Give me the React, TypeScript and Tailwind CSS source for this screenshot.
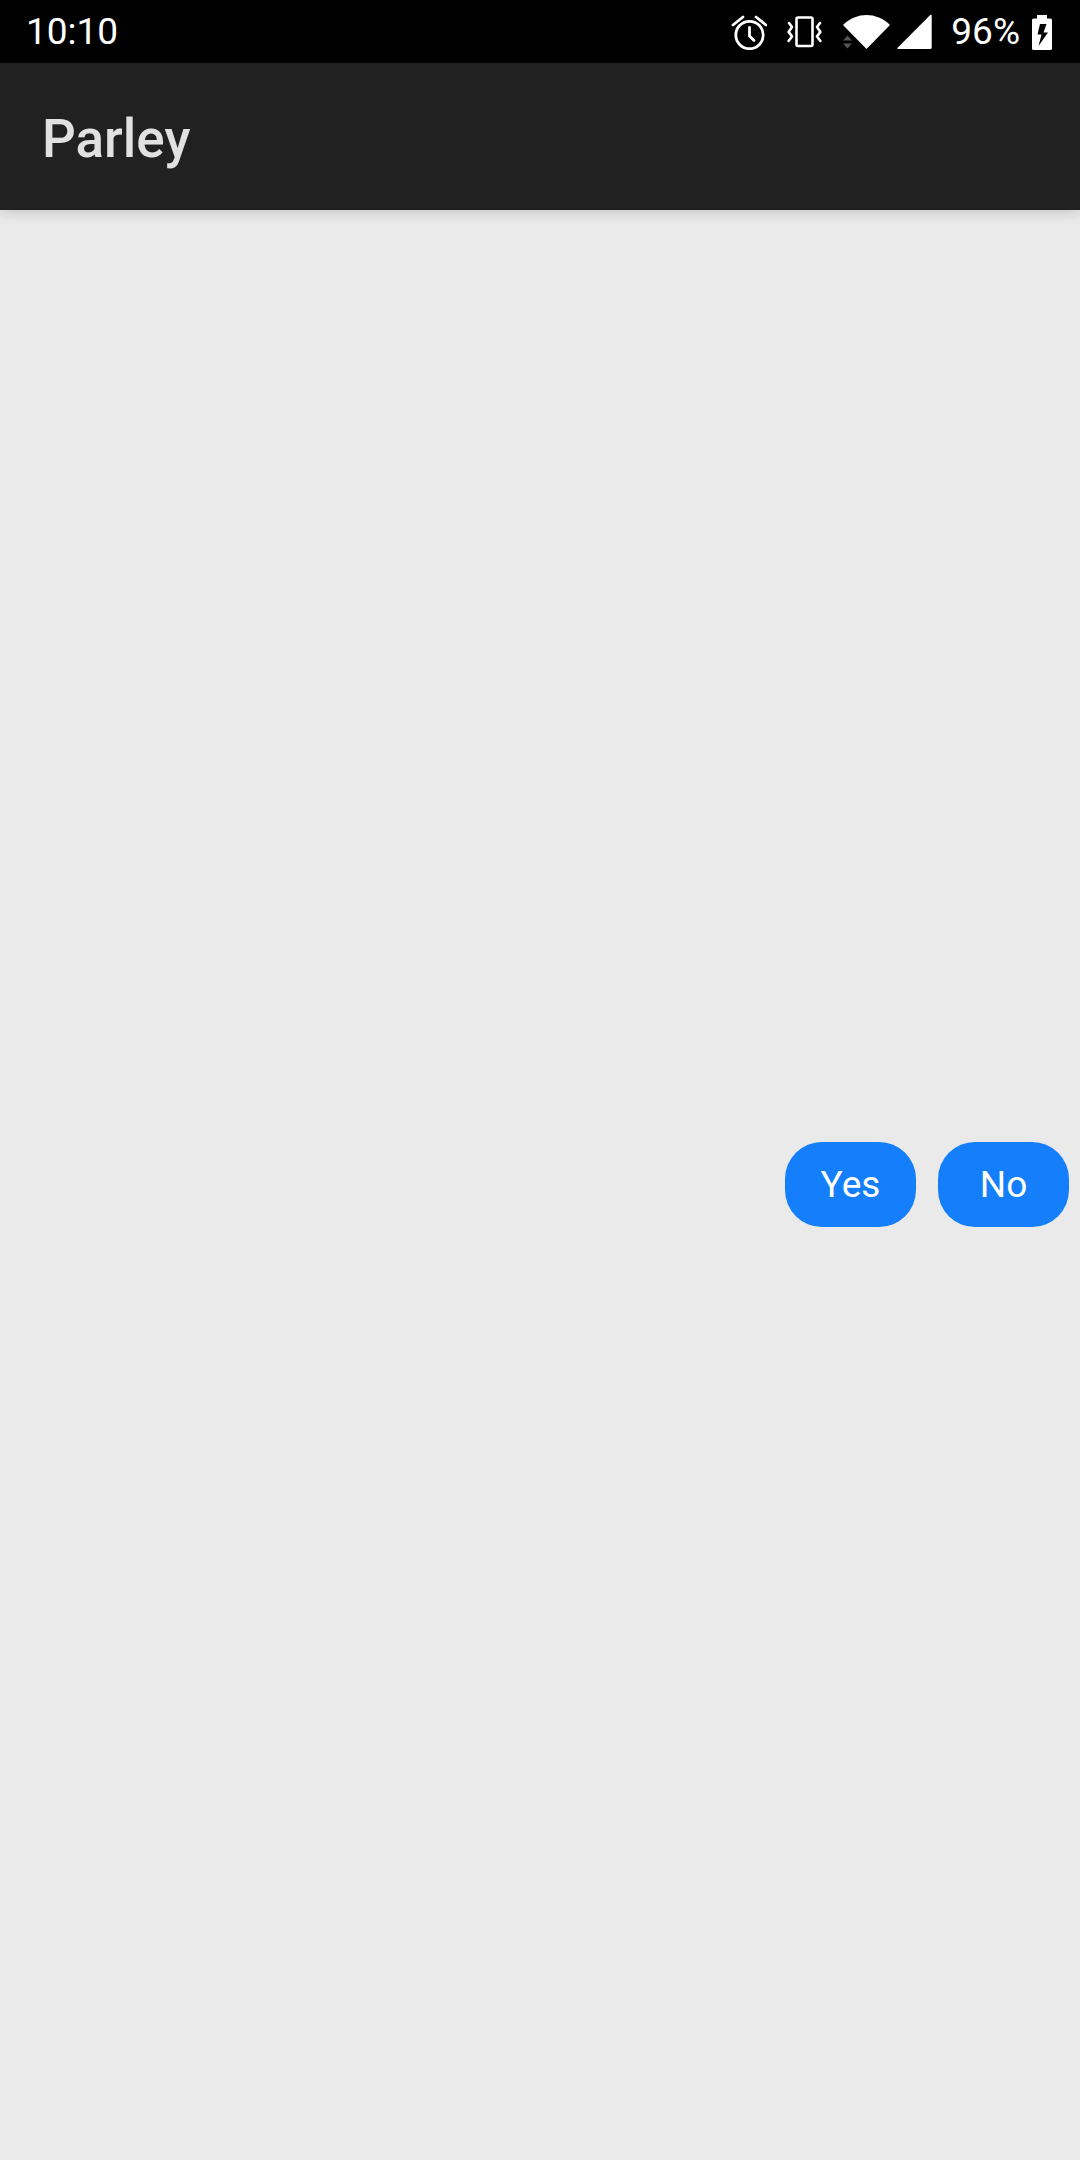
import React from "react";

function AlarmIcon() {
  return (
    <svg className="h-9 w-9" viewBox="0 0 36 36" fill="none" stroke="white" strokeWidth="2.8" strokeLinecap="round" strokeLinejoin="round" aria-label="Alarm">
      <circle cx="18.5" cy="21" r="13.7" />
      <path d="M18.5 13.5v8.500l4.500 4.500" />
      <path d="M2 11l10-8M35 11L25 3" />
    </svg>
  );
}

function VibrateIcon() {
  return (
    <svg className="h-9 w-9" viewBox="0 0 36 36" fill="none" stroke="white" strokeWidth="2.6" strokeLinecap="round" strokeLinejoin="round" aria-label="Vibrate">
      <rect x="9.5" y="3.5" width="16" height="28.500" rx="1.5" />
      <path d="M2 9l3 4-3.400 4.900L5 22.400l-3.400 4.600M33 9l-3 4 3.400 4.900-3.400 4.500 3.400 4.600" />
    </svg>
  );
}

function WifiIcon() {
  return (
    <svg className="h-9 w-12" viewBox="0 0 48 36" aria-label="Wi-Fi">
      <path d="M0 11C14-2.200 33-2.200 47 11L23.500 35z" fill="white" />
      <path d="M4.500 21.500l4.500 5H0zM4.500 34.500L9 29.500H0z" fill="#555555" />
    </svg>
  );
}

function SignalIcon() {
  return (
    <svg className="h-9 w-9" viewBox="0 0 36 36" fill="white" aria-label="Mobile signal">
      <path d="M.6 35Q0 34.500.6 33.800L33.200 1Q34.700.3 34.700 1.700V33.500Q34.700 35 33 35z" />
    </svg>
  );
}

function BatteryIcon() {
  return (
    <svg className="h-9 w-5" viewBox="0 0 20 36" aria-label="Battery charging">
      <path fill="white" fillRule="evenodd" d="M5 1h10v3.500h3.500q1.500 0 1.500 1.500v28.500q0 1.500-1.500 1.500h-17Q0 36 0 34.500V6q0-1.500 1.500-1.500H5zM8 10L5.500 20.500H9.500L6.500 32 16 18.500H11.500L14.500 10z" />
    </svg>
  );
}

function StatusBar() {
  return (
    <div className="flex h-[63px] items-center justify-between bg-black pr-7 pl-[26px] text-[37px] leading-none text-white">
      <time>10:10</time>
      <div className="flex items-center">
        <div className="flex items-center gap-5">
          <AlarmIcon />
          <VibrateIcon />
          <div className="flex items-center gap-1.5">
            <WifiIcon />
            <SignalIcon />
          </div>
        </div>
        <span className="mr-3 ml-[18px]">96%</span>
        <BatteryIcon />
      </div>
    </div>
  );
}

function ReplyButton({ label }: { label: string }) {
  return (
    <button type="button" className="h-[85px] w-[131px] rounded-[37px] bg-[#147efb] text-[37px] leading-none text-white">
      {label}
    </button>
  );
}

export default function App() {
  return (
    <div className="flex min-h-screen flex-col bg-[#eaeaea] font-['Roboto',sans-serif]">
      <StatusBar />
      <header className="flex h-[147px] items-center bg-[#212121] px-[42px] pt-1.5 shadow-[0_3px_12px_rgba(0,0,0,0.14)]">
        <h1 className="text-[53px] leading-none font-medium text-[#e1e1e1]">Parley</h1>
      </header>
      <main className="flex grow items-center justify-end gap-[22px] px-[11px] pb-0.5">
        <ReplyButton label="Yes" />
        <ReplyButton label="No" />
      </main>
    </div>
  );
}
